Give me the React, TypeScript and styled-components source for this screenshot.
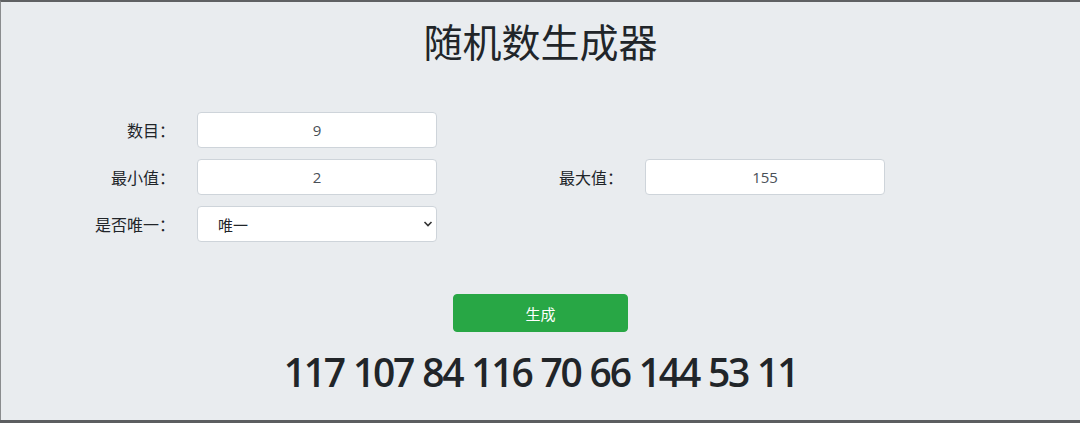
import React, { useState } from "react";
import styled, { createGlobalStyle } from "styled-components";

const GlobalStyle = createGlobalStyle`
  html, body {
    margin: 0;
    padding: 0;
    background: #e9ecef;
  }
  body {
    font-family: "Open Sans", "Noto Sans CJK SC", sans-serif;
    color: #212529;
  }
`;

const Page = styled.div`
  display: flex;
  flex-direction: column;
  width: 1080px;
  height: 423px;
  overflow: hidden;
`;

const Jumbotron = styled.div`
  flex: 1;
  display: flex;
  flex-direction: column;
  align-items: center;
  background: #e9ecef;
  border-top: 2px solid #5f6163;
  border-left: 1px solid #8a8c8e;
  padding-top: 14px;
`;

const BottomBar = styled.div`
  height: 3px;
  background: #5c5e60;
`;

const Title = styled.h1`
  margin: 0;
  font-family: "Noto Sans CJK SC", sans-serif;
  font-size: 39px;
  font-weight: 400;
  line-height: 48px;
  color: #212529;
`;

const Form = styled.div`
  align-self: flex-start;
  display: grid;
  grid-template-columns: 196px 240px 208px 240px;
  grid-auto-rows: 36px;
  row-gap: 11px;
  margin-top: 48px;
`;

const Label = styled.label<{ $col?: number }>`
  grid-column: ${(p) => p.$col ?? 1};
  display: flex;
  align-items: center;
  justify-content: flex-end;
  padding-right: 22px;
  font-family: "Noto Sans CJK SC", sans-serif;
  font-size: 16px;
  color: #212529;
`;

const Input = styled.input<{ $col?: number }>`
  grid-column: ${(p) => p.$col ?? 2};
  box-sizing: border-box;
  width: 240px;
  height: 36px;
  border: 1px solid #ced4da;
  border-radius: 4px;
  background: #fff;
  text-align: center;
  font-family: "Open Sans", "Noto Sans CJK SC", sans-serif;
  font-size: 15px;
  color: #495057;
  outline: none;
`;

const SelectWrap = styled.div`
  grid-column: 2;
  position: relative;
`;

const Select = styled.select`
  appearance: none;
  box-sizing: border-box;
  width: 240px;
  height: 36px;
  border: 1px solid #ced4da;
  border-radius: 4px;
  background: #fff;
  padding: 0 0 0 20px;
  font-family: "Noto Sans CJK SC", sans-serif;
  font-size: 15px;
  color: #212529;
  outline: none;
`;

const Chevron = styled.svg`
  position: absolute;
  right: 4px;
  top: 14px;
  pointer-events: none;
`;

const Button = styled.button`
  margin-top: 52px;
  width: 175px;
  height: 38px;
  border: 1px solid #28a745;
  border-radius: 4px;
  background: #28a745;
  color: #fff;
  font-family: "Noto Sans CJK SC", sans-serif;
  font-size: 15px;
  cursor: pointer;
`;

const Result = styled.div`
  margin-top: 16px;
  font-family: "Open Sans", sans-serif;
  font-size: 39px;
  font-weight: 600;
  line-height: 48px;
  letter-spacing: -2.2px;
  word-spacing: 1px;
  color: #212529;
`;

export default function App() {
  const [count, setCount] = useState("9");
  const [min, setMin] = useState("2");
  const [max, setMax] = useState("155");
  const [unique, setUnique] = useState("1");
  const [nums] = useState([117, 107, 84, 116, 70, 66, 144, 53, 11]);

  return (
    <Page>
      <GlobalStyle />
      <Jumbotron>
        <Title>随机数生成器</Title>
        <Form>
          <Label>数目：</Label>
          <Input value={count} onChange={(e) => setCount(e.target.value)} />
          <Label>最小值：</Label>
          <Input value={min} onChange={(e) => setMin(e.target.value)} />
          <Label $col={3}>最大值：</Label>
          <Input $col={4} value={max} onChange={(e) => setMax(e.target.value)} />
          <Label>是否唯一：</Label>
          <SelectWrap>
            <Select value={unique} onChange={(e) => setUnique(e.target.value)}>
              <option value="1">唯一</option>
              <option value="0">不唯一</option>
            </Select>
            <Chevron width="10" height="8" viewBox="0 0 10 8">
              <path d="M1.5 2 L5 5.5 L8.5 2" fill="none" stroke="#333" strokeWidth="1.6" />
            </Chevron>
          </SelectWrap>
        </Form>
        <Button>生成</Button>
        <Result>{nums.join(" ")}</Result>
      </Jumbotron>
      <BottomBar />
    </Page>
  );
}
